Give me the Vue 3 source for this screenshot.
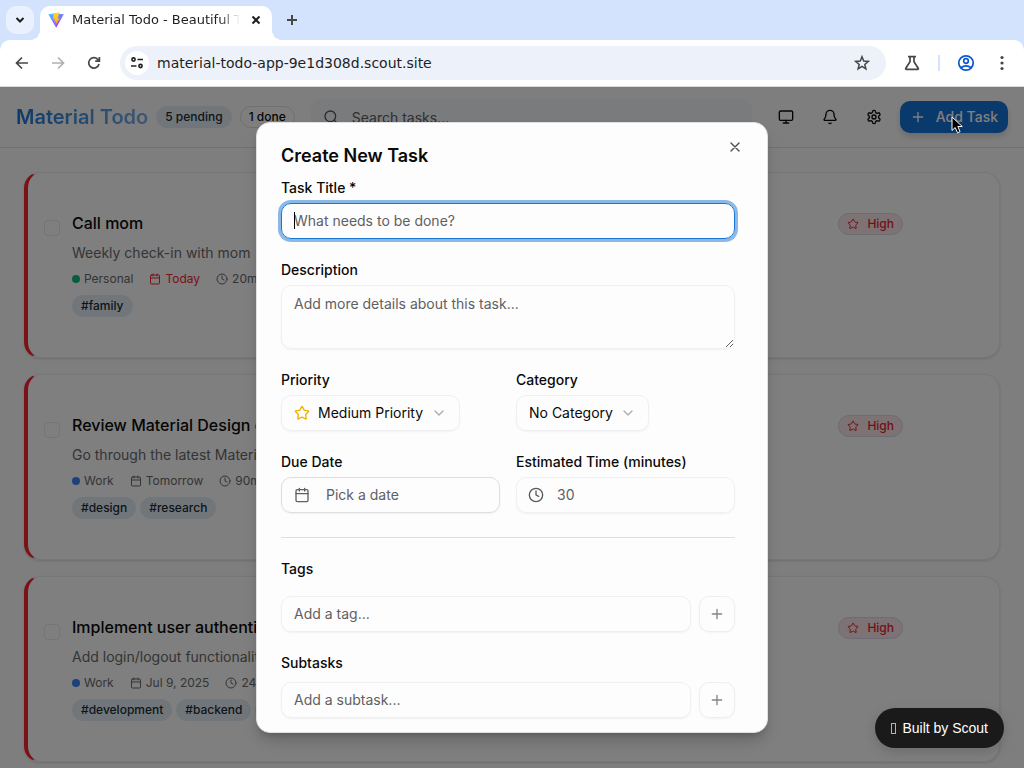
<script setup>
import { ref } from 'vue'

const title = ref('')
const description = ref('')
const priority = ref('Medium Priority')
const category = ref('No Category')

const tasks = [
  {
    title: 'Call mom', description: 'Weekly check-in with mom', category: 'Personal',
    color: 'green', due: 'Today', urgent: true, time: '20m', tags: ['#family'],
  },
  {
    title: 'Review Material Design guidelines', description: 'Go through the latest Material Design 3 guidelines',
    category: 'Work', color: 'blue', due: 'Tomorrow', urgent: false, time: '90m', tags: ['#design', '#research'],
  },
  {
    title: 'Implement user authentication', description: 'Add login/logout functionality with session handling',
    category: 'Work', color: 'blue', due: 'Jul 9, 2025', urgent: false, time: '240m',
    tags: ['#development', '#backend', '#security'],
  },
]
</script>

<template>
  <div class="window">
    <svg class="defs" aria-hidden="true">
      <symbol id="plus" viewBox="0 0 24 24"><path d="M5 12h14M12 5v14" /></symbol>
      <symbol id="x" viewBox="0 0 24 24"><path d="M18 6 6 18M6 6l12 12" /></symbol>
      <symbol id="chevron" viewBox="0 0 24 24"><path d="m6 9 6 6 6-6" /></symbol>
      <symbol id="search" viewBox="0 0 24 24"><circle cx="11" cy="11" r="8" /><path d="m21 21-4.3-4.3" /></symbol>
      <symbol id="clock" viewBox="0 0 24 24"><circle cx="12" cy="12" r="10" /><path d="M12 6v6l4 2" /></symbol>
      <symbol id="calendar" viewBox="0 0 24 24"><path d="M8 2v4M16 2v4M3 10h18" /><rect x="3" y="4" width="18" height="18" rx="2" /></symbol>
      <symbol id="monitor" viewBox="0 0 24 24"><rect x="2" y="3" width="20" height="14" rx="2" /><path d="M8 21h8M12 17v4" /></symbol>
      <symbol id="bell" viewBox="0 0 24 24"><path d="M10.27 21a2 2 0 0 0 3.46 0" /><path d="M3.26 15.33A1 1 0 0 0 4 17h16a1 1 0 0 0 .74-1.67C19.41 13.96 18 12.5 18 8A6 6 0 0 0 6 8c0 4.5-1.41 5.96-2.74 7.33" /></symbol>
      <symbol id="settings" viewBox="0 0 24 24"><path d="M12.22 2h-.44a2 2 0 0 0-2 2v.18a2 2 0 0 1-1 1.73l-.43.25a2 2 0 0 1-2 0l-.15-.08a2 2 0 0 0-2.73.73l-.22.38a2 2 0 0 0 .73 2.73l.15.1a2 2 0 0 1 1 1.72v.51a2 2 0 0 1-1 1.74l-.15.09a2 2 0 0 0-.73 2.73l.22.38a2 2 0 0 0 2.73.73l.15-.08a2 2 0 0 1 2 0l.43.25a2 2 0 0 1 1 1.73V20a2 2 0 0 0 2 2h.44a2 2 0 0 0 2-2v-.18a2 2 0 0 1 1-1.73l.43-.25a2 2 0 0 1 2 0l.15.08a2 2 0 0 0 2.73-.73l.22-.39a2 2 0 0 0-.73-2.73l-.15-.08a2 2 0 0 1-1-1.74v-.5a2 2 0 0 1 1-1.74l.15-.09a2 2 0 0 0 .73-2.73l-.22-.38a2 2 0 0 0-2.73-.73l-.15.08a2 2 0 0 1-2 0l-.43-.25a2 2 0 0 1-1-1.73V4a2 2 0 0 0-2-2z" /><circle cx="12" cy="12" r="3" /></symbol>
      <symbol id="star" viewBox="0 0 24 24"><path d="M11.53 2.3a.53.53 0 0 1 .95 0l2.31 4.68a2.12 2.12 0 0 0 1.6 1.16l5.16.76a.53.53 0 0 1 .3.9l-3.74 3.64a2.12 2.12 0 0 0-.61 1.88l.88 5.14a.53.53 0 0 1-.77.56l-4.62-2.43a2.12 2.12 0 0 0-1.97 0L6.4 21.01a.53.53 0 0 1-.77-.56l.88-5.14a2.12 2.12 0 0 0-.61-1.88L2.16 9.8a.53.53 0 0 1 .29-.91l5.17-.76a2.12 2.12 0 0 0 1.6-1.16z" /></symbol>
    </svg>

    <div class="browser">
      <div class="tabstrip">
        <button class="tab-search" aria-label="Search tabs">
          <svg width="10" height="10" viewBox="0 0 10 10"><path d="M1.5 3 5 6.500 8.500 3" /></svg>
        </button>
        <div class="tab">
          <svg class="favicon" width="16" height="16" viewBox="0 0 16 16">
            <defs>
              <linearGradient id="vite" x1="0" y1="0" x2=".6" y2="1"><stop offset="0" stop-color="#41d1ff" /><stop offset="1" stop-color="#a52fff" /></linearGradient>
              <linearGradient id="bolt" x1="0" y1="0" x2="0" y2="1"><stop offset="0" stop-color="#ffd83d" /><stop offset="1" stop-color="#ffa800" /></linearGradient>
            </defs>
            <path d="M0.300 2.200 8.100 1.200 15.800 2.300 8.200 15.800Z" fill="url(#vite)" />
            <path d="M11.300 0.200 5.500 1.400 5.100 7.600 6.900 7.200 6.500 10 8 9.600 7.400 13.300 11.700 6.200 9.700 6.600Z" fill="url(#bolt)" />
          </svg>
          <span class="tab-title">Material Todo - Beautiful T</span>
          <button class="tab-close" aria-label="Close tab">
            <svg width="10" height="10" viewBox="0 0 10 10"><path d="m1.500 1.500 7 7M8.500 1.500l-7 7" /></svg>
          </button>
        </div>
        <button class="new-tab" aria-label="New tab">
          <svg width="12" height="12" viewBox="0 0 12 12"><path d="M6 1v10M1 6h10" /></svg>
        </button>
      </div>
      <div class="toolbar">
        <button class="nav" aria-label="Back"><svg width="16" height="16" viewBox="0 0 16 16"><path d="M14 8H3M8 2.500 2.500 8 8 13.500" /></svg></button>
        <button class="nav forward" aria-label="Forward"><svg width="16" height="16" viewBox="0 0 16 16"><path d="M2 8h11M8 2.500 13.500 8 8 13.500" /></svg></button>
        <button class="nav" aria-label="Reload"><svg width="16" height="16" viewBox="0 0 16 16"><path d="M13 9A5.200 5.200 0 1 1 11.700 4.300L13.200 6M13.400 2v4.200H9.200" /></svg></button>
        <div class="address">
          <button class="site-info" aria-label="Site information">
            <svg width="14" height="14" viewBox="0 0 14 14"><circle cx="3.500" cy="3.500" r="1.600" /><path d="M7.500 3.500H13M1 10h5.500" /><circle cx="10.500" cy="10" r="1.600" /></svg>
          </button>
          <input class="url" aria-label="Address" value="material-todo-app-9e1d308d.scout.site" />
          <button class="bookmark" aria-label="Bookmark">
            <svg width="16" height="16" viewBox="0 0 16 16"><path d="m8 1.800 1.700 4.300 4.600.3-3.500 3 1.100 4.500L8 11.400l-3.900 2.500 1.100-4.500-3.500-3 4.600-.3Z" /></svg>
          </button>
        </div>
        <button class="tool" aria-label="Labs"><svg width="16" height="16" viewBox="0 0 16 16"><path d="M4 1.700h8M6 1.700v5L1.800 13.200q-.5 1.100.7 1.100h11q1.200 0 .7-1.100L10 6.700v-5" /></svg></button>
        <span class="tool-divider"></span>
        <button class="tool profile" aria-label="Profile"><svg width="18" height="18" viewBox="0 0 18 18"><circle cx="9" cy="9" r="7.200" /><circle cx="9" cy="7" r="2.300" /><path d="M3.800 13.800q5.200-3.800 10.400 0" /></svg></button>
        <button class="tool more" aria-label="Menu"><svg width="4" height="16" viewBox="0 0 4 16"><circle cx="2" cy="2.500" r="1.600" /><circle cx="2" cy="8" r="1.600" /><circle cx="2" cy="13.500" r="1.600" /></svg></button>
      </div>
    </div>

    <div class="page">
      <header class="header">
        <h1>Material Todo</h1>
        <div class="counts">
          <span class="badge filled">5 pending</span>
          <span class="badge">1 done</span>
        </div>
        <div class="search with-icon">
          <svg class="icon"><use href="#search" /></svg>
          <input type="text" aria-label="Search tasks" placeholder="Search tasks..." />
        </div>
        <div class="actions">
          <button class="icon-button" aria-label="Theme"><svg class="icon"><use href="#monitor" /></svg></button>
          <button class="icon-button" aria-label="Notifications"><svg class="icon"><use href="#bell" /></svg></button>
          <button class="icon-button" aria-label="Settings"><svg class="icon"><use href="#settings" /></svg></button>
          <button class="add-task"><svg class="icon"><use href="#plus" /></svg>Add Task</button>
        </div>
      </header>

      <main class="tasks">
        <article v-for="task in tasks" :key="task.title" class="card">
          <input class="check" type="checkbox" :aria-label="task.title" />
          <div class="card-body">
            <div class="card-head">
              <h2>{{ task.title }}</h2>
              <span class="badge high"><svg class="icon small"><use href="#star" /></svg>High</span>
            </div>
            <p>{{ task.description }}</p>
            <div class="meta">
              <span><i class="dot" :class="task.color"></i>{{ task.category }}</span>
              <span :class="{ urgent: task.urgent }"><svg class="icon small"><use href="#calendar" /></svg>{{ task.due }}</span>
              <span><svg class="icon small"><use href="#clock" /></svg>{{ task.time }}</span>
            </div>
            <div class="tags"><span v-for="tag in task.tags" :key="tag" class="badge filled">{{ tag }}</span></div>
          </div>
        </article>
      </main>

      <div class="overlay">
        <section class="dialog" role="dialog" aria-modal="true" aria-labelledby="dialog-title">
          <button class="close" aria-label="Close"><svg class="icon"><use href="#x" /></svg></button>
          <h2 id="dialog-title">Create New Task</h2>
          <form @submit.prevent>
            <div class="field">
              <label for="title">Task Title *</label>
              <div class="focus-box">
                <input id="title" v-model="title" class="control focused" type="text" placeholder="What needs to be done?" />
                <span class="caret"></span>
              </div>
            </div>
            <div class="field">
              <label for="description">Description</label>
              <textarea id="description" v-model="description" class="control" placeholder="Add more details about this task..."></textarea>
            </div>
            <div class="columns">
              <div class="field">
                <label for="priority">Priority</label>
                <div class="select starred">
                  <svg class="icon lead"><use href="#star" /></svg>
                  <select id="priority" v-model="priority" class="control">
                    <option>Low Priority</option><option>Medium Priority</option><option>High Priority</option>
                  </select>
                  <svg class="icon chevron"><use href="#chevron" /></svg>
                </div>
              </div>
              <div class="field">
                <label for="category">Category</label>
                <div class="select">
                  <select id="category" v-model="category" class="control">
                    <option>No Category</option><option>Work</option><option>Personal</option>
                  </select>
                  <svg class="icon chevron"><use href="#chevron" /></svg>
                </div>
              </div>
            </div>
            <div class="columns">
              <div class="field">
                <label for="due">Due Date</label>
                <button id="due" type="button" class="control date"><svg class="icon"><use href="#calendar" /></svg>Pick a date</button>
              </div>
              <div class="field">
                <label for="time">Estimated Time (minutes)</label>
                <div class="with-icon">
                  <svg class="icon"><use href="#clock" /></svg>
                  <input id="time" class="control" type="text" inputmode="numeric" placeholder="30" />
                </div>
              </div>
            </div>
            <hr />
            <div class="field tags-field">
              <label for="tag">Tags</label>
              <div class="add-row">
                <input id="tag" class="control" type="text" placeholder="Add a tag..." />
                <button type="button" class="add" aria-label="Add tag" disabled><svg class="icon"><use href="#plus" /></svg></button>
              </div>
            </div>
            <div class="field subtasks-field">
              <label for="subtask">Subtasks</label>
              <div class="add-row">
                <input id="subtask" class="control" type="text" placeholder="Add a subtask..." />
                <button type="button" class="add" aria-label="Add subtask" disabled><svg class="icon"><use href="#plus" /></svg></button>
              </div>
            </div>
          </form>
        </section>
      </div>

      <a class="scout" href="#"><i class="glyph"></i>Built by Scout</a>
      <svg class="pointer" width="16" height="20" viewBox="0 0 16 20"><path d="M1 1v13.500l3.200-3 2.300 5.300 2.600-1.100-2.300-5.200h4.500Z" /></svg>
    </div>
  </div>
</template>

<style>
body {
  overflow: hidden;
}
</style>

<style scoped>
* {
  box-sizing: border-box;
}

.window {
  display: flex;
  flex-direction: column;
  height: 100vh;
  font-family: Inter, "Liberation Sans", sans-serif;
  font-size: 14px;
  line-height: 20px;
  color: #0a0a0a;
}

.defs {
  position: absolute;
  width: 0;
  height: 0;
}

button,
input,
textarea,
select {
  margin: 0;
  padding: 0;
  border: 0;
  background: none;
  font: inherit;
  color: inherit;
  outline: none;
}

h1,
h2,
p {
  margin: 0;
}

svg {
  display: block;
  flex: none;
  fill: none;
  stroke: currentColor;
}

.icon {
  width: 16px;
  height: 16px;
  stroke-width: 2;
  stroke-linecap: round;
  stroke-linejoin: round;
}

.icon.small {
  width: 12px;
  height: 12px;
}

/* Browser frame */
.browser {
  flex: none;
  background: #d3e3fd;
  border-bottom: 1px solid #d9dadb;
  font-family: "DejaVu Sans", sans-serif;
  color: #1f1f1f;
}

.tabstrip {
  display: flex;
  align-items: center;
  height: 40px;
  padding: 0 6px;
}

.tab-search {
  display: grid;
  place-items: center;
  width: 28px;
  height: 28px;
  border-radius: 10px;
  background: #e9f0fe;
}

.tab-search svg,
.tab-close svg {
  stroke-width: 2;
}

.tab {
  position: relative;
  display: flex;
  align-items: center;
  align-self: flex-end;
  gap: 8px;
  width: 232px;
  height: 34px;
  margin-left: 6px;
  padding: 0 8px 6px;
  border-radius: 10px 10px 0 0;
  background: #fff;
}

.tab::before,
.tab::after {
  content: "";
  position: absolute;
  bottom: 0;
  width: 10px;
  height: 10px;
}

.tab::before {
  right: 100%;
  background: radial-gradient(circle at 0 0, transparent 10px, #fff 10px);
}

.tab::after {
  left: 100%;
  background: radial-gradient(circle at 100% 0, transparent 10px, #fff 10px);
}

.favicon {
  stroke: none;
}

.tab-title {
  flex: 1;
  overflow: hidden;
  white-space: nowrap;
  font-size: 13px;
  mask-image: linear-gradient(to left, transparent, #000 20px);
}

.tab-close {
  display: grid;
  place-items: center;
  width: 16px;
  height: 16px;
}

.new-tab {
  margin-left: 14px;
  color: #474747;
}

.new-tab svg {
  stroke-width: 2;
}

.toolbar {
  display: flex;
  align-items: center;
  height: 46px;
  padding: 0 20px 0 14px;
  border-radius: 10px 10px 0 0;
  background: #fff;
}

.nav {
  display: grid;
  place-items: center;
  width: 16px;
  height: 28px;
  margin-right: 20px;
  color: #474747;
}

.nav svg,
.tool svg {
  stroke-width: 1.7;
}

.nav.forward {
  color: #b0b0b0;
}

.address {
  display: flex;
  flex: 1;
  align-items: center;
  height: 34px;
  margin-left: -2px;
  padding: 0 16px 0 5px;
  border-radius: 17px;
  background: #ecf1fa;
}

.site-info {
  display: grid;
  place-items: center;
  width: 24px;
  height: 24px;
  border-radius: 12px;
  background: #fff;
}

.site-info svg {
  stroke-width: 1.6;
}

.url {
  flex: 1;
  min-width: 0;
  margin-left: 8px;
  font-size: 14px;
}

.bookmark,
.tool {
  color: #474747;
}

.bookmark svg {
  stroke-width: 1.5;
}

.tool {
  margin-left: 18px;
}

.tool-divider {
  width: 2px;
  height: 16px;
  margin-left: 18px;
  background: #d3e3fd;
}

.tool.profile {
  margin-left: 17px;
  color: #0b57d0;
}

.tool.more {
  margin-left: 25px;
}

.tool.more svg {
  fill: currentColor;
  stroke: none;
}

/* Application */
.page {
  position: relative;
  flex: 1;
  min-height: 0;
  overflow: hidden;
  background: #fdfdfd;
}

.header {
  display: flex;
  align-items: center;
  gap: 16px;
  height: 61px;
  padding: 0 16px;
  border-bottom: 1px solid #e3e3e3;
}

.header h1 {
  margin-right: -8px;
  background: linear-gradient(to right, #1976d2, #7bb0e7);
  background-clip: text;
  color: transparent;
  font-size: 20px;
  font-weight: 600;
  line-height: 28px;
  white-space: nowrap;
}

.counts,
.actions {
  display: flex;
  align-items: center;
  gap: 8px;
}

.badge {
  display: inline-flex;
  align-items: center;
  gap: 8px;
  padding: 2px 8px;
  border: 1px solid #dfdfdf;
  border-radius: 11px;
  font-size: 12px;
  font-weight: 500;
  line-height: 16px;
  white-space: nowrap;
}

.badge.filled {
  border-color: #e3edf5;
  background: #e3edf5;
  color: #1b2a36;
}

.badge.high {
  border-color: #d8d8e4;
  background: #fbe6e8;
  color: #e7212f;
}

.with-icon {
  position: relative;
}

.with-icon .icon {
  position: absolute;
  top: 50%;
  left: 12px;
  margin-top: -8px;
  color: #595959;
}

.search {
  flex: 1;
  min-width: 0;
}

.search input {
  width: 100%;
  height: 36px;
  padding: 0 12px 0 41px;
  border-radius: 10px;
  background: #f4f6fa;
}

input::placeholder,
textarea::placeholder {
  color: #5f6063;
  opacity: 1;
}

.icon-button {
  display: grid;
  place-items: center;
  width: 36px;
  height: 36px;
}

.add-task {
  display: flex;
  align-items: center;
  gap: 10px;
  height: 32px;
  padding: 0 10px;
  border-radius: 10px;
  background: #1573d6;
  box-shadow: 0 4px 6px rgb(0 0 0 / 15%);
  color: #fff;
  font-weight: 500;
  white-space: nowrap;
}

.tasks {
  display: grid;
  gap: 16px;
  padding: 24px;
}

.card {
  display: flex;
  gap: 12px;
  padding: 40px 16px;
  border: 1px solid #efeff1;
  border-left: 4px solid #f4252f;
  border-radius: 16px;
  background: #fefefe;
  box-shadow: 0 1px 3px rgb(0 0 0 / 15%);
}

.check {
  flex: none;
  width: 16px;
  height: 16px;
  margin-top: 7px;
  border: 1px solid #ebebed;
  border-radius: 4px;
  appearance: none;
}

.card-body {
  display: flex;
  flex: 1;
  flex-direction: column;
  gap: 8px;
  min-width: 0;
}

.card-head {
  display: flex;
  align-items: flex-start;
  justify-content: space-between;
  padding-right: 80px;
}

.card h2 {
  font-size: 16px;
  font-weight: 500;
  line-height: 20px;
}

.card p {
  color: #6a6a6a;
}

.meta {
  display: flex;
  gap: 16px;
  color: #6a6a6a;
  font-size: 12px;
  line-height: 16px;
}

.meta span {
  display: flex;
  align-items: center;
  gap: 4px;
}

.meta .urgent {
  color: #f4252f;
}

.dot {
  width: 8px;
  height: 8px;
  border-radius: 50%;
}

.dot.green {
  background: #10b981;
}

.dot.blue {
  background: #3b82f6;
}

.tags {
  display: flex;
  gap: 4px;
}

/* Dialog */
.overlay {
  position: absolute;
  inset: 0;
  display: grid;
  place-items: center;
  grid-template-rows: 100%;
  background: rgb(0 0 0 / 50%);
}

.dialog {
  position: relative;
  width: 100%;
  max-width: 512px;
  max-height: calc(90% - 1px);
  overflow: hidden;
  padding: 24px 32px 24px 24px;
  border: 1px solid #e0e0e0;
  border-radius: 14px;
  background: #fdfdfd;
  box-shadow: 0 10px 15px -3px rgb(0 0 0 / 20%), 0 4px 6px -4px rgb(0 0 0 / 20%);
}

.dialog h2 {
  margin-bottom: 16px;
  font-size: 18px;
  font-weight: 600;
  line-height: 18px;
}

.close {
  position: absolute;
  top: 16px;
  right: 24px;
  color: #4b4b4b;
}

form {
  display: grid;
  gap: 24px;
}

.field {
  display: grid;
  gap: 8px;
}

.field label {
  font-weight: 500;
  line-height: 14px;
}

.columns {
  display: grid;
  grid-template-columns: 1fr 1fr;
  gap: 16px;
}

.control {
  display: block;
  width: 100%;
  height: 36px;
  padding: 0 12px;
  border: 1px solid #eff0f4;
  border-radius: 10px;
  box-shadow: 0 1px 2px rgb(0 0 0 / 5%);
}

textarea.control {
  height: 64px;
  padding: 8px 12px;
  resize: vertical;
}

.control.focused {
  border-color: #1976d2;
  box-shadow: 0 0 0 3px rgb(25 118 210 / 50%);
}

.focus-box {
  position: relative;
}

.caret {
  position: absolute;
  top: 9px;
  left: 13px;
  width: 1px;
  height: 17px;
  background: #000;
}

.select {
  position: relative;
  justify-self: start;
}

.select .control {
  width: auto;
  padding-right: 35px;
  appearance: none;
}

.starred .control {
  padding-left: 36px;
}

.select .icon {
  position: absolute;
  top: 10px;
}

.lead {
  left: 13px;
  color: #f0b100;
}

.chevron {
  right: 13px;
  color: #adadad;
}

.date {
  display: flex;
  align-items: center;
  gap: 16px;
  border-color: #dedede;
  color: #5f6063;
}

.with-icon .control {
  padding-left: 40px;
}

hr {
  width: 100%;
  height: 1px;
  margin: 0;
  border: 0;
  background: #dedede;
}

.tags-field {
  gap: 20px;
}

.subtasks-field {
  gap: 12px;
}

.add-row {
  display: flex;
  gap: 8px;
}

.add-row .control {
  flex: 1;
  min-width: 0;
}

.add {
  display: grid;
  place-items: center;
  width: 36px;
  height: 36px;
  border: 1px solid #eeeeee;
  border-radius: 10px;
  box-shadow: 0 1px 2px rgb(0 0 0 / 4%);
  color: #848484;
}

.scout {
  position: absolute;
  right: 20px;
  bottom: 20px;
  display: flex;
  align-items: center;
  gap: 6px;
  height: 40px;
  padding: 0 16px;
  border-radius: 20px;
  background: #1a1a1a;
  box-shadow: 0 4px 12px rgb(0 0 0 / 15%);
  color: #fff;
  font-family: "Liberation Sans", sans-serif;
  font-size: 14px;
  text-decoration: none;
}

.glyph {
  width: 5px;
  height: 11px;
  border: 1px solid #b4b4b4;
}

.pointer {
  position: absolute;
  top: 29px;
  right: 57px;
  fill: #000;
  stroke: #fff;
}
</style>
